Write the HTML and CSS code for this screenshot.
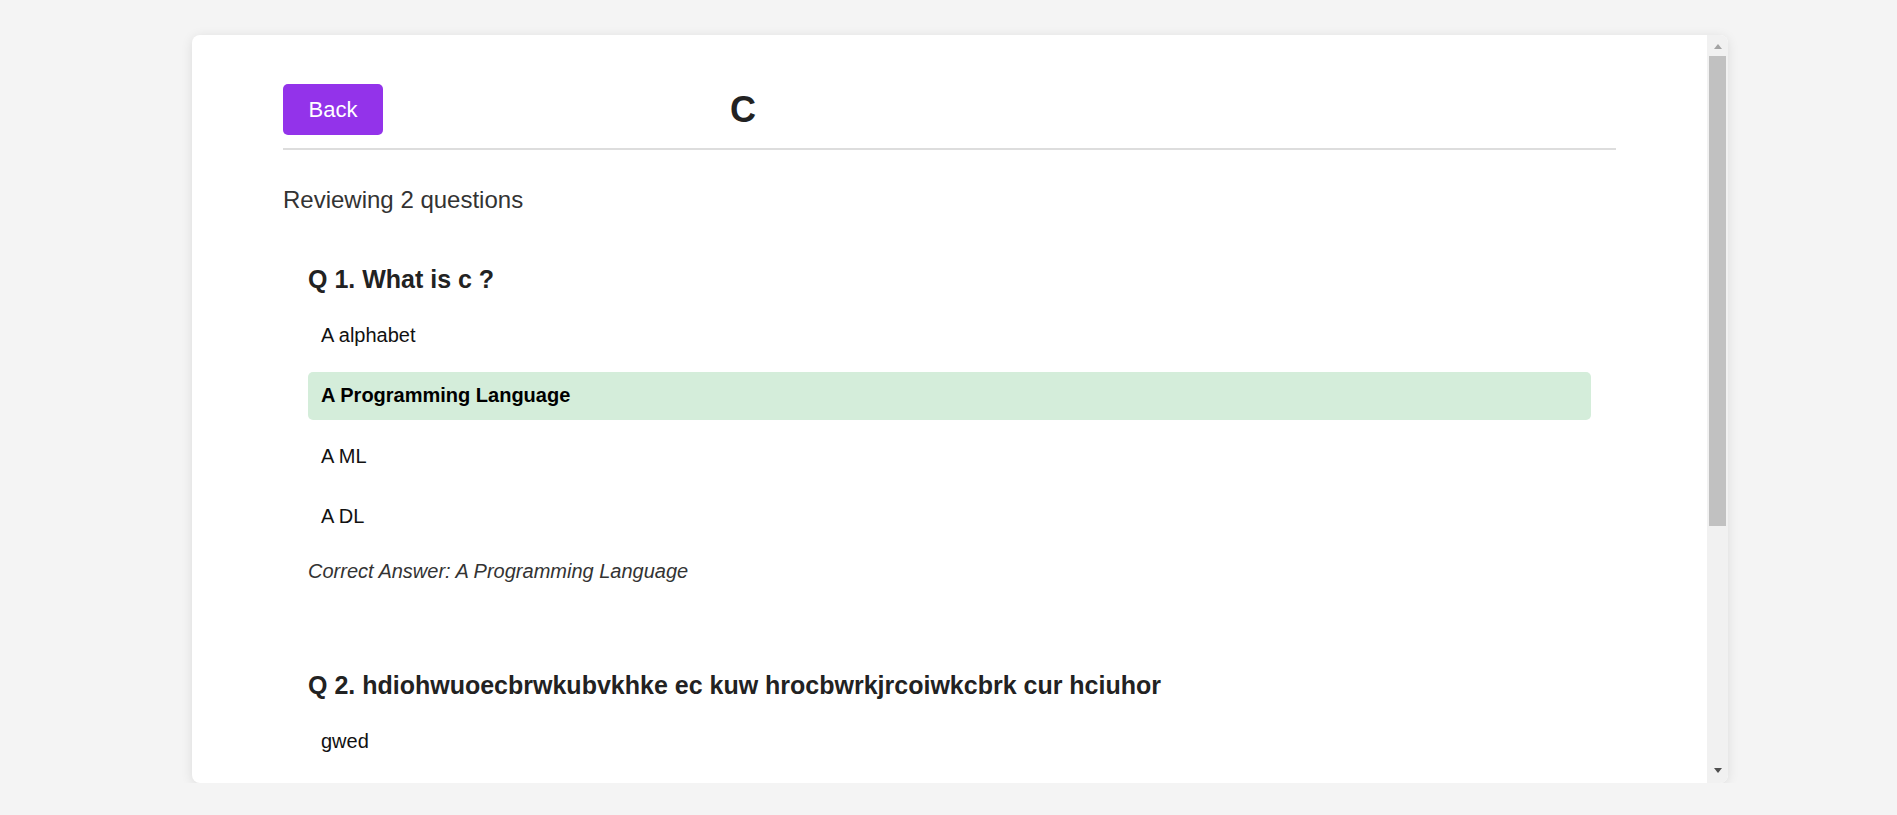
FILE: index.html
```html
<!DOCTYPE html>
<html lang="en">
<head>
<meta charset="utf-8">
<title>Review - C</title>
<link rel="stylesheet" href="styles.css">
</head>
<body>
<div class="page">
  <main class="card">
    <div class="card-body">
      <header class="review-header">
        <button class="back-btn" type="button">Back</button>
        <h1 class="quiz-title">C</h1>
      </header>
      <p class="summary">Reviewing 2 questions</p>
      <section class="question">
        <h3 class="q-text">Q 1. What is c ?</h3>
        <ul class="options">
          <li class="option">A alphabet</li>
          <li class="option correct">A Programming Language</li>
          <li class="option">A ML</li>
          <li class="option">A DL</li>
        </ul>
        <p class="answer">Correct Answer: A Programming Language</p>
      </section>
      <section class="question">
        <h3 class="q-text">Q 2. hdiohwuoecbrwkubvkhke ec kuw hrocbwrkjrcoiwkcbrk cur hciuhor</h3>
        <ul class="options">
          <li class="option">gwed</li>
        </ul>
      </section>
    </div>
    <div class="scrollbar" aria-hidden="true">
      <span class="sb-btn"><span class="sb-arrow-up"></span></span>
      <span class="sb-track"><span class="sb-thumb"></span></span>
      <span class="sb-btn"><span class="sb-arrow-down"></span></span>
    </div>
  </main>
</div>
</body>
</html>
```
FILE: styles.css
```css
html, body {
  margin: 0;
  background: #f4f4f4;
  font-family: "Liberation Sans", Arial, sans-serif;
}

.page {
  padding: 35px 0 0 192px;
}

.card {
  display: flex;
  width: 1536px;
  height: 748px;
  background: #fff;
  border-radius: 8px;
  box-shadow: 0 2px 12px rgba(0, 0, 0, 0.1);
  overflow: hidden;
}

.card-body {
  flex: 1;
  min-width: 0;
  overflow: hidden;
  padding: 49px 91px 0 91px;
}

/* scrollbar */
.scrollbar {
  width: 21px;
  flex: none;
  display: flex;
  flex-direction: column;
  background: #f1f1f1;
}

.sb-btn {
  display: block;
  height: 21px;
  flex: none;
}

.sb-arrow-up {
  display: block;
  width: 0;
  height: 0;
  margin: 9px auto 0;
  border-left: 4.5px solid transparent;
  border-right: 4.5px solid transparent;
  border-bottom: 5px solid #a3a3a3;
}

.sb-arrow-down {
  display: block;
  width: 0;
  height: 0;
  margin: 6px auto 0;
  border-left: 4.5px solid transparent;
  border-right: 4.5px solid transparent;
  border-top: 5px solid #505050;
}

.sb-track {
  display: block;
  flex: 1;
  padding: 0 2px;
}

.sb-thumb {
  display: block;
  height: 470px;
  background: #c1c1c1;
}

/* header */
.review-header {
  display: flex;
  align-items: center;
  padding-bottom: 12.5px;
  border-bottom: 2px solid #dddddd;
}

.back-btn {
  font-family: inherit;
  font-size: 22px;
  line-height: 26px;
  padding: 12.5px 25.5px;
  background: #9333ea;
  color: #fff;
  border: none;
  border-radius: 5px;
}

.quiz-title {
  margin: 0 0 0 347px;
  font-size: 36px;
  line-height: 41px;
  font-weight: bold;
  color: #222;
}

.summary {
  margin: 36.5px 0 0;
  font-size: 24px;
  line-height: 28px;
  color: #333;
}

.question {
  margin-top: 26px;
  padding: 25px;
}

.q-text {
  margin: 0 0 18px;
  font-size: 25px;
  line-height: 28px;
  font-weight: bold;
  color: #222;
}

.options {
  list-style: none;
  margin: 0;
  padding: 0;
}

.option {
  padding: 12.5px 13px;
  margin-bottom: 12.5px;
  font-size: 20px;
  line-height: 23px;
  border-radius: 5px;
  color: #111;
}

.option.correct {
  background: #d4edda;
  font-weight: bold;
  color: #000;
}

.answer {
  margin: 19px 0 12.5px;
  font-size: 20px;
  line-height: 23px;
  font-style: italic;
  color: #333;
}
```
